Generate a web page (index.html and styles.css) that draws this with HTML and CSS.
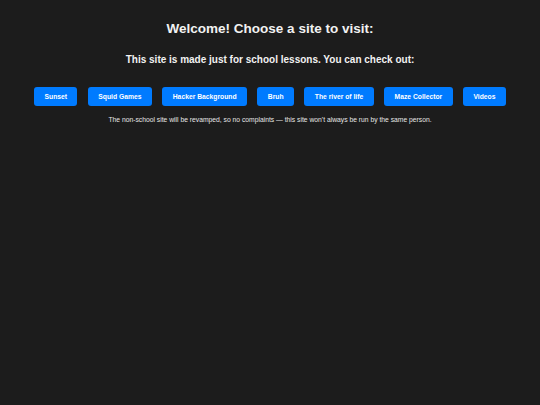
FILE: index.html
```html
<!DOCTYPE html>
<html lang="en">
<head>
<meta charset="utf-8">
<title>Welcome</title>
<link rel="stylesheet" href="styles.css">
</head>
<body>
<main class="page">
  <h1 class="title">Welcome! Choose a site to visit:</h1>
  <h2 class="subtitle">This site is made just for school lessons. You can check out:</h2>
  <nav class="links">
    <a class="btn" href="#">Sunset</a>
    <a class="btn" href="#">Squid Games</a>
    <a class="btn" href="#">Hacker Background</a>
    <a class="btn" href="#">Bruh</a>
    <a class="btn" href="#">The river of life</a>
    <a class="btn" href="#">Maze Collector</a>
    <a class="btn" href="#">Videos</a>
  </nav>
  <p class="note">The non-school site will be revamped, so no complaints — this site won't always be run by the same person.</p>
</main>
</body>
</html>
```
FILE: styles.css
```css
html, body {
  margin: 0;
  padding: 0;
  background: #1c1c1c;
  height: 100%;
}
body {
  font-family: "Liberation Sans", Arial, sans-serif;
  color: #f2f2f2;
}
.page {
  display: flex;
  flex-direction: column;
  align-items: center;
  padding-top: 21px;
  text-align: center;
}
.title {
  margin: 0;
  font-size: 13.5px;
  font-weight: bold;
}
.subtitle {
  margin: 18px 0 0;
  font-size: 10px;
  font-weight: bold;
}
.links {
  display: flex;
  justify-content: center;
  gap: 10.5px;
  margin-top: 22px;
}
.btn {
  display: block;
  background: #007bff;
  color: #ffffff;
  text-decoration: none;
  font-size: 6.75px;
  font-weight: bold;
  line-height: 7.7px;
  padding: 5.5px 10.4px;
  border-radius: 3px;
}
.note {
  margin: 10px 0 0;
  font-size: 6.75px;
  color: #e6e6e6;
}
```
